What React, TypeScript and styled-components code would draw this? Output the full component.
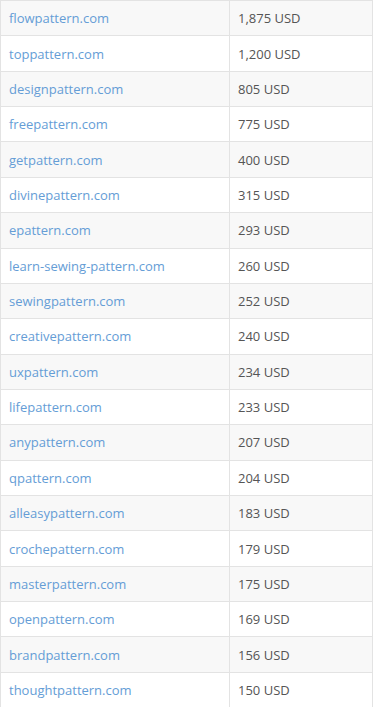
import React from "react";
import styled, { createGlobalStyle } from "styled-components";

const Global = createGlobalStyle`
  html, body { margin: 0; padding: 0; background: #fff; }
  body { font-family: "Open Sans", "Liberation Sans", sans-serif; }
`;

const rows: [string, string][] = [
  ["flowpattern.com", "1,875 USD"],
  ["toppattern.com", "1,200 USD"],
  ["designpattern.com", "805 USD"],
  ["freepattern.com", "775 USD"],
  ["getpattern.com", "400 USD"],
  ["divinepattern.com", "315 USD"],
  ["epattern.com", "293 USD"],
  ["learn-sewing-pattern.com", "260 USD"],
  ["sewingpattern.com", "252 USD"],
  ["creativepattern.com", "240 USD"],
  ["uxpattern.com", "234 USD"],
  ["lifepattern.com", "233 USD"],
  ["anypattern.com", "207 USD"],
  ["qpattern.com", "204 USD"],
  ["alleasypattern.com", "183 USD"],
  ["crochepattern.com", "179 USD"],
  ["masterpattern.com", "175 USD"],
  ["openpattern.com", "169 USD"],
  ["brandpattern.com", "156 USD"],
  ["thoughtpattern.com", "150 USD"],
];

const Table = styled.div`
  width: 373px;
  box-sizing: border-box;
  border-left: 1px solid #e3e3e3;
  border-right: 1px solid #e3e3e3;
`;

const Row = styled.div<{ $striped: boolean }>`
  display: grid;
  grid-template-columns: 229px 1fr;
  height: 35.37px;
  box-sizing: border-box;
  border-top: 1px solid #e3e3e3;
  background: ${(p) => (p.$striped ? "#f8f8f8" : "#ffffff")};
`;

const Cell = styled.div<{ $first?: boolean }>`
  display: flex;
  align-items: center;
  padding-left: 8px;
  font-size: 13px;
  color: #555;
  border-right: ${(p) => (p.$first ? "1px solid #e3e3e3" : "none")};
  white-space: nowrap;
`;

const Link = styled.a`
  color: #659dd6;
  text-decoration: none;
`;

export default function App() {
  return (
    <>
      <Global />
      <Table>
        {rows.map(([d, v], i) => (
          <Row key={d} $striped={i % 2 === 0}>
            <Cell $first>
              <Link href="#">{d}</Link>
            </Cell>
            <Cell>{v}</Cell>
          </Row>
        ))}
      </Table>
    </>
  );
}
